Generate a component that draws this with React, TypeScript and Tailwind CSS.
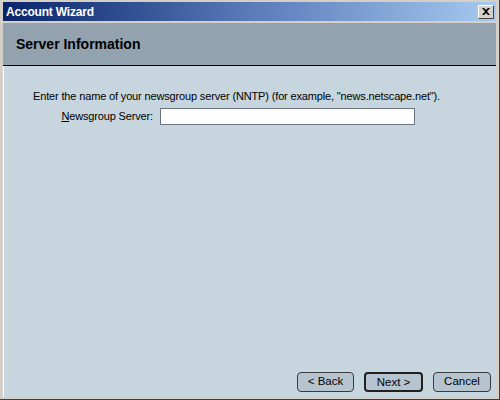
export default function App() {
  const font = { fontFamily: '"Liberation Sans", Arial, sans-serif' };

  return (
    <div
      className="w-[500px] h-[400px] flex flex-col bg-[#d4d0c8] pl-[3px] pt-[2px] pr-[3px] pb-[2px] border-r border-b border-[#404040]"
      style={font}
    >
      {/* Title bar */}
      <div className="h-[19px] flex items-center justify-between bg-gradient-to-r from-[#0a246a] via-[#5a7ab8] to-[#a6caf0] pl-[3px] pr-[2px]">
        <span className="text-[12px] font-bold text-white leading-none tracking-[-0.2px]">Account Wizard</span>
        <div className="w-[16px] h-[14px] bg-[#d4d0c8] border-t border-l border-white border-r border-b border-r-[#404040] border-b-[#404040] flex items-center justify-center">
          <svg width="8" height="7" viewBox="0 0 8 7">
            <path d="M0 0h2l2 2 2-2h2L5 3.5 8 7H6L4 5 2 7H0l3-3.5z" fill="#000" />
          </svg>
        </div>
      </div>

      {/* Page header */}
      <div className="mt-[2px] h-[43px] bg-[#93a2af] border-b border-black flex items-center pl-[13px]">
        <span className="text-[14px] font-bold text-black">Server Information</span>
      </div>

      {/* Body */}
      <div className="flex-1 bg-[#c7d5de] flex flex-col pl-[29px] pr-[5px] pt-[23px] pb-[5px] border-l border-white">
        <p className="text-[11px] leading-[14px] tracking-[-0.15px] text-black">
          Enter the name of your newsgroup server (NNTP) (for example, "news.netscape.net").
        </p>
        <div className="mt-[5px] flex items-center">
          <label className="w-[120px] text-right text-[11px] tracking-[-0.15px] text-black">
            <span className="underline">N</span>ewsgroup Server:
          </label>
          <input
            className="ml-[7px] w-[255px] h-[17px] bg-white border border-[#6b7480] outline-none"
            type="text"
          />
        </div>

        <div className="mt-auto flex justify-end gap-[10px]">
          <button className="w-[57px] h-[20px] rounded-[4px] bg-[#b6c4d0] border border-[#3a3a3a] text-[11.5px] text-black">
            &lt; Back
          </button>
          <button className="w-[59px] h-[20px] rounded-[4px] bg-[#b6c4d0] border-2 border-[#202020] text-[11.5px] text-black">
            Next &gt;
          </button>
          <button className="w-[58px] h-[20px] rounded-[4px] bg-[#b6c4d0] border border-[#3a3a3a] text-[11.5px] text-black">
            Cancel
          </button>
        </div>
      </div>
    </div>
  );
}
